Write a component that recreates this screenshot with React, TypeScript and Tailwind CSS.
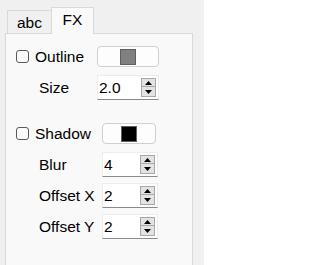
import React from "react";

function Check() {
  return <div className="w-[13px] h-[13px] border border-[#5a5a5a] rounded-[3px] bg-[#fbfbfb] shrink-0" />;
}

function ColorBtn({ w, color }: { w: string; color: string }) {
  return (
    <div className={`${w} h-[21px] rounded-[4px] border border-[#d0d0d0] bg-[#fdfdfd] flex items-center justify-center`}>
      <div className="w-[16px] h-[16px] border border-[#5f5f5f]" style={{ background: color }} />
    </div>
  );
}

function Arrow({ up }: { up: boolean }) {
  return (
    <svg width="7" height="4" viewBox="0 0 7 4">
      {up ? <polygon points="0,4 7,4 3.5,0" fill="#000" /> : <polygon points="0,0 7,0 3.5,4" fill="#000" />}
    </svg>
  );
}

function Spin({ w, value }: { w: string; value: string }) {
  return (
    <div className={`${w} h-[25px] bg-white border border-[#ececec] border-b-[#8a8a8a] flex items-center justify-between pl-[1px] pr-[2px]`}>
      <span className="text-[15.5px] leading-none text-black">{value}</span>
      <div className="flex flex-col">
        <div className="w-[15px] h-[9px] bg-[#e3e3e3] border border-[#a8a8a8] flex items-center justify-center">
          <Arrow up />
        </div>
        <div className="w-[15px] h-[10px] bg-[#e3e3e3] border border-t-0 border-[#a8a8a8] flex items-center justify-center">
          <Arrow up={false} />
        </div>
      </div>
    </div>
  );
}

export default function App() {
  return (
    <div
      className="w-[204px] h-[265px] bg-[#f0f0f0] overflow-hidden pl-[5px] pt-[7px] text-[#000]"
      style={{ fontFamily: '"Liberation Sans", Arial, sans-serif' }}
    >
      <div className="flex items-end h-[26px] pl-[2px]">
        <div className="w-[45px] h-[23px] border border-b-0 border-[#d9d9d9] bg-[#f0f0f0] flex items-center justify-center text-[15.5px] pt-[1px]">
          abc
        </div>
        <div className="relative z-10 -ml-px -mb-px w-[43px] h-[27px] border border-b-0 border-[#d9d9d9] bg-[#f9f9f9] flex items-center justify-center text-[15.5px] pb-[2px]">
          FX
        </div>
      </div>
      <div className="w-[188px] h-[260px] border border-[#d9d9d9] bg-[#f9f9f9] pt-[12px] pl-[10px]">
        <div className="flex items-center h-[21px]">
          <div className="w-[81px] flex items-center gap-[6px]">
            <Check />
            <span className="text-[15.5px] leading-none">Outline</span>
          </div>
          <ColorBtn w="w-[62px]" color="#808080" />
        </div>
        <div className="flex items-center h-[25px] mt-[8px]">
          <div className="w-[81px] pl-[23px] text-[15.5px] leading-none">Size</div>
          <Spin w="w-[62px]" value="2.0" />
        </div>

        <div className="flex items-center h-[21px] mt-[23px]">
          <div className="w-[86px] flex items-center gap-[6px]">
            <Check />
            <span className="text-[15.5px] leading-none">Shadow</span>
          </div>
          <ColorBtn w="w-[54px]" color="#000000" />
        </div>
        <div className="flex items-center h-[25px] mt-[8px]">
          <div className="w-[86px] pl-[23px] text-[15.5px] leading-none">Blur</div>
          <Spin w="w-[56px]" value="4" />
        </div>
        <div className="flex items-center h-[25px] mt-[6px]">
          <div className="w-[86px] pl-[23px] text-[15.5px] leading-none">Offset X</div>
          <Spin w="w-[56px]" value="2" />
        </div>
        <div className="flex items-center h-[25px] mt-[6px]">
          <div className="w-[86px] pl-[23px] text-[15.5px] leading-none">Offset Y</div>
          <Spin w="w-[56px]" value="2" />
        </div>
      </div>
    </div>
  );
}
